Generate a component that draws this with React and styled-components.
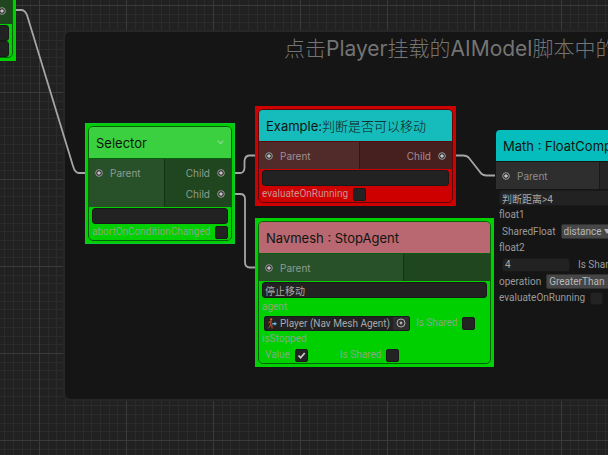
import React from "react";
import styled, { createGlobalStyle, css } from "styled-components";

const GlobalStyle = createGlobalStyle`
  *, *::before, *::after { box-sizing: border-box; }
  body {
    margin: 0;
    background: #212121;
    overflow: hidden;
    font-family: Roboto, Inter, "Noto Sans CJK SC", sans-serif;
  }
  input, select, button { font: inherit; color: inherit; margin: 0; }
`;

const Canvas = styled.main`
  position: relative;
  width: 100%;
  height: 100vh;
  overflow: hidden;
  background: #212121;
  font-size: 10px;
  line-height: 14px;
`;

const Backdrop = styled.svg`
  position: absolute;
  inset: 0;
  width: 100%;
  height: 100%;
`;

const Group = styled.section`
  position: absolute;
  left: 63px;
  top: 30px;
  width: 1100px;
  height: 371px;
  padding: 3px 219px;
  background: #151515;
  border: 2px solid #262626;
  border-radius: 7px;
`;

const GroupTitle = styled.h1`
  margin: 0;
  font-family: Inter, "Noto Sans CJK SC", sans-serif;
  font-size: 21px;
  line-height: 27px;
  font-weight: 400;
  color: #747474;
  white-space: nowrap;
`;

const Han = styled.span`
  font-weight: 300;
`;

const tones = {
  success: { edge: "#00cf00", line: "#07600c", left: "#295129", right: "#1f461f", text: "#8f9d8f", label: "#84aa84" },
  failure: { edge: "#cf0000", line: "#5c0808", left: "#512a2a", right: "#461f1f", text: "#a09090", label: "#c99494" },
  idle: { edge: "transparent", line: "#151515", left: "#2e2e2e", right: "#252525", text: "#8f8f8f", label: "#9a9a9a" },
};

const NodeFrame = styled.article`
  position: absolute;
  left: ${(p) => p.$x}px;
  top: ${(p) => p.$y}px;
  width: ${(p) => p.$width}px;
  padding: 3px;
  background: ${(p) => tones[p.$tone].edge};
  border: 0;
  ${(p) => p.$selected && css`
    padding: 2px;
    border: 1px solid #12c634;
  `}
`;

const NodeBody = styled.div`
  border: 1px solid ${(p) => tones[p.$tone].line};
  border-radius: 5px;
  overflow: hidden;
`;

const NodeHeader = styled.header`
  display: flex;
  align-items: center;
  justify-content: space-between;
  height: 31px;
  padding: 0 7px;
  background: ${(p) => p.$color};
  color: #101510;
`;

const NodeTitle = styled.h2`
  margin: 0;
  font-family: Inter, "Noto Sans CJK SC", sans-serif;
  font-size: 13px;
  line-height: 18px;
  font-weight: 400;
  white-space: nowrap;
`;

const Collapse = styled.button`
  display: flex;
  padding: 0;
  border: 0;
  background: none;
  color: #8fd890;
`;

const Ports = styled.div`
  display: grid;
  grid-template-columns: ${(p) => p.$split}px 1fr;
  border-top: 1px solid ${(p) => tones[p.$tone].line};
  font-family: Inter, sans-serif;
  color: ${(p) => tones[p.$tone].text};
`;

const PortColumn = styled.div`
  padding: 3px 6px;
  background: ${(p) => (p.$output ? tones[p.$tone].right : tones[p.$tone].left)};
  border-left: ${(p) => (p.$output ? "1px solid rgba(0, 0, 0, 0.3)" : "0")};
`;

const Port = styled.div`
  display: flex;
  align-items: center;
  justify-content: ${(p) => (p.$output ? "flex-end" : "flex-start")};
  gap: 7px;
  height: 21px;
`;

const Fields = styled.div`
  padding: 1px 3px 0;
  color: ${(p) => tones[p.$tone].label};
`;

const FieldList = styled.div`
  padding-top: 1px;
`;

const TextField = styled.input`
  display: block;
  width: ${(p) => (p.$short ? "68px" : "100%")};
  height: ${(p) => (p.$short ? "14px" : "16px")};
  padding: 0 2px;
  border: 1px solid #191919;
  border-radius: 3px;
  background: #222222;
  color: #a8a8a8;
  outline: 0;
`;

const Row = styled.div`
  display: flex;
  align-items: center;
  gap: ${(p) => p.$gap || 5}px;
  height: ${(p) => (p.$tall ? 17 : 16)}px;
  padding-left: ${(p) => p.$indent || 0}px;
  white-space: nowrap;
`;

const CheckLabel = styled.label`
  display: flex;
  align-items: center;
  gap: 5px;
`;

const CheckBox = styled.input`
  appearance: none;
  flex: none;
  width: 13px;
  height: 13px;
  border: 1px solid #1a1a1a;
  border-radius: 2px;
  background: #232323;
  &:checked {
    background: #232323
      url("data:image/svg+xml,%3Csvg xmlns='http://www.w3.org/2000/svg' viewBox='0 0 11 11'%3E%3Cpath d='M2.5 5.5 4.6 7.8 8.7 3' fill='none' stroke='%23d0d0d0' stroke-width='1.7'/%3E%3C/svg%3E")
      center / contain no-repeat;
  }
`;

const ObjectField = styled.button`
  display: flex;
  align-items: center;
  gap: 3px;
  width: 146px;
  height: 15px;
  padding: 0 0 0 3px;
  border: 1px solid #1a1a1a;
  border-radius: 2px;
  background: #222222;
  color: #a8a8a8;
  line-height: 13px;
  overflow: hidden;

  svg { flex: none; }
`;

const ObjectName = styled.span`
  flex: 1;
  text-align: left;
`;

const Picker = styled.span`
  display: flex;
  flex: none;
  align-items: center;
  justify-content: center;
  width: 16px;
  height: 13px;
  background: #303030;
`;

const SelectWrap = styled.span`
  display: flex;
  align-items: center;
  width: ${(p) => p.$width}px;
  height: 15px;
  border: 1px solid #303030;
  border-radius: 2px;
  background: #464646;
  color: #b8b8b8;
`;

const Select = styled.select`
  appearance: none;
  flex: 1;
  min-width: 0;
  height: 13px;
  padding: 0 2px;
  border: 0;
  background: transparent;
  line-height: 13px;
`;

function PortDot() {
  return (
    <svg width="8" height="8" viewBox="0 0 8 8" aria-hidden="true">
      <circle cx="4" cy="4" r="3.3" fill="#1b1b1b" stroke="#a3a3a3" strokeWidth="1" />
      <circle cx="4" cy="4" r="1.8" fill="#c4c4c4" />
    </svg>
  );
}

function AgentIcon() {
  return (
    <svg width="9" height="11" viewBox="0 0 9 11" aria-hidden="true">
      <circle cx="3.2" cy="1.4" r="1.1" fill="#e0612c" />
      <path d="M3.2 2.8 2.7 6.2 4 7.9v2.6M2.7 6.2 1.8 8.6.4 9.9M.6 5.2 1.5 3.7 3.2 3.2" fill="none" stroke="#d9562a" strokeWidth="1" />
      <path d="M4.2 5h2.3V3.7L9 5.7 6.500 7.700V6.400H4.200z" fill="#69b5d3" />
    </svg>
  );
}

function Check({ label, defaultChecked = false }) {
  return (
    <CheckLabel>
      {label}
      <CheckBox type="checkbox" defaultChecked={defaultChecked} />
    </CheckLabel>
  );
}

function Dropdown({ label, width, value }) {
  return (
    <SelectWrap $width={width}>
      <Select aria-label={label} defaultValue={value}>
        <option>{value}</option>
      </Select>
      <svg width="8" height="5" viewBox="0 0 8 5" aria-hidden="true">
        <path d="M0 0h6L3 5z" fill="#b0b0b0" />
      </svg>
    </SelectWrap>
  );
}

function GraphNode({ x, y, width, split, tone, color, title, input, outputs = [], collapsible, selected, children }) {
  return (
    <NodeFrame $x={x} $y={y} $width={width} $tone={tone} $selected={selected}>
      <NodeBody $tone={tone}>
        <NodeHeader $color={color}>
          {title && <NodeTitle>{title}</NodeTitle>}
          {collapsible && (
            <Collapse type="button" aria-label="Collapse">
              <svg width="7" height="5" viewBox="0 0 7 5" aria-hidden="true">
                <path d="M.7.7 3.5 3.7 6.3.7" fill="none" stroke="currentColor" strokeWidth="1.2" />
              </svg>
            </Collapse>
          )}
        </NodeHeader>
        <Ports $split={split} $tone={tone}>
          <PortColumn $tone={tone}>
            {input && <Port><PortDot />{input}</Port>}
          </PortColumn>
          <PortColumn $tone={tone} $output>
            {outputs.map((name, i) => (
              <Port key={i} $output>{name}<PortDot /></Port>
            ))}
          </PortColumn>
        </Ports>
        <Fields $tone={tone}>{children}</Fields>
      </NodeBody>
    </NodeFrame>
  );
}

const gridLines = Array.from({ length: 240 }, (_, i) => ({ step: Math.round(i * 8.7), major: i % 10 === 0 }));

function Grid() {
  return (
    <Backdrop aria-hidden="true" shapeRendering="crispEdges">
      {[false, true].map((major) =>
        gridLines.filter((l) => l.major === major).map(({ step }) => (
          <g key={step} fill={major ? "#3a3a3a" : "#2b2b2b"}>
            <rect x={step - 48} y="0" width="1" height="100%" />
            <rect x="0" y={step - 82} width="100%" height="1" />
          </g>
        ))
      )}
    </Backdrop>
  );
}

function Wires() {
  return (
    <Backdrop aria-hidden="true" fill="none" stroke="#a6a6a6" strokeWidth="1.8">
      <path d="M2 10H21Q25 10 27 15L73 166Q75 173 79 173H90" />
      <path d="M225 173H240Q244 173 244.5 168V161Q245 156 249 155.5H260" />
      <path d="M225 194H240Q245 194 245 199V262Q245 267.5 250 267.5H260" />
      <path d="M446 155.5H463Q467 155.5 469 158L480 172Q482 175.5 487 175.5H506" />
    </Backdrop>
  );
}

export default function App() {
  return (
    <>
      <GlobalStyle />
      <Canvas>
        <Grid />
        <Group>
          <GroupTitle>
            <Han>点击</Han>Player<Han>挂载的</Han>AIModel<Han>脚本中的</Han>
          </GroupTitle>
        </Group>
        <Wires />

        <GraphNode x={-134} y={-39} width={150} split={75} tone="success" color="#3bd03f" outputs={[""]}>
          <TextField aria-label="Description" />
          <TextField aria-label="Comment" />
        </GraphNode>

        <GraphNode x={85} y={123} width={150} split={75} tone="success" color="#3bd03f" title="Selector" input="Parent" outputs={["Child", "Child"]} collapsible selected>
          <TextField aria-label="Description" />
          <Row><Check label="abortOnConditionChanged" /></Row>
        </GraphNode>

        <GraphNode x={255} y={106} width={201} split={100} tone="failure" color="#16bcbc" title={<>Example:<Han>判断是否可以移动</Han></>} input="Parent" outputs={["Child"]}>
          <TextField aria-label="Description" />
          <Row><Check label="evaluateOnRunning" /></Row>
        </GraphNode>

        <GraphNode x={255} y={218} width={239} split={144} tone="success" color="#b96770" title="Navmesh : StopAgent" input="Parent">
          <TextField aria-label="Description" defaultValue="停止移动" />
          <FieldList>
            <Row>agent</Row>
            <Row $indent={2} $gap={6}>
              <ObjectField type="button">
                <AgentIcon />
                <ObjectName>Player (Nav Mesh Agent)</ObjectName>
                <Picker>
                  <svg width="10" height="10" viewBox="0 0 10 10" aria-hidden="true">
                    <circle cx="5" cy="5" r="4" fill="none" stroke="#b0b0b0" />
                    <circle cx="5" cy="5" r="1.4" fill="#b0b0b0" />
                  </svg>
                </Picker>
              </ObjectField>
              <Check label="Is Shared" />
            </Row>
            <Row>isStopped</Row>
            <Row $indent={3} $gap={32}>
              <Check label="Value" defaultChecked />
              <Check label="Is Shared" />
            </Row>
          </FieldList>
        </GraphNode>

        <GraphNode x={492} y={126} width={216} split={103} tone="idle" color="#05bdbd" title="Math : FloatCompare" input="Parent">
          <TextField aria-label="Description" defaultValue="判断距离>4" />
          <FieldList>
            <Row>float1</Row>
            <Row $tall $indent={3}>
              SharedFloat
              <Dropdown label="float1" width={52} value="distance" />
            </Row>
            <Row>float2</Row>
            <Row $tall $indent={3} $gap={8}>
              <TextField $short aria-label="float2" defaultValue="4" />
              <Check label="Is Shared" />
            </Row>
            <Row $tall>
              operation
              <Dropdown label="operation" width={100} value="GreaterThan" />
            </Row>
            <Row><Check label="evaluateOnRunning" /></Row>
          </FieldList>
        </GraphNode>
      </Canvas>
    </>
  );
}
